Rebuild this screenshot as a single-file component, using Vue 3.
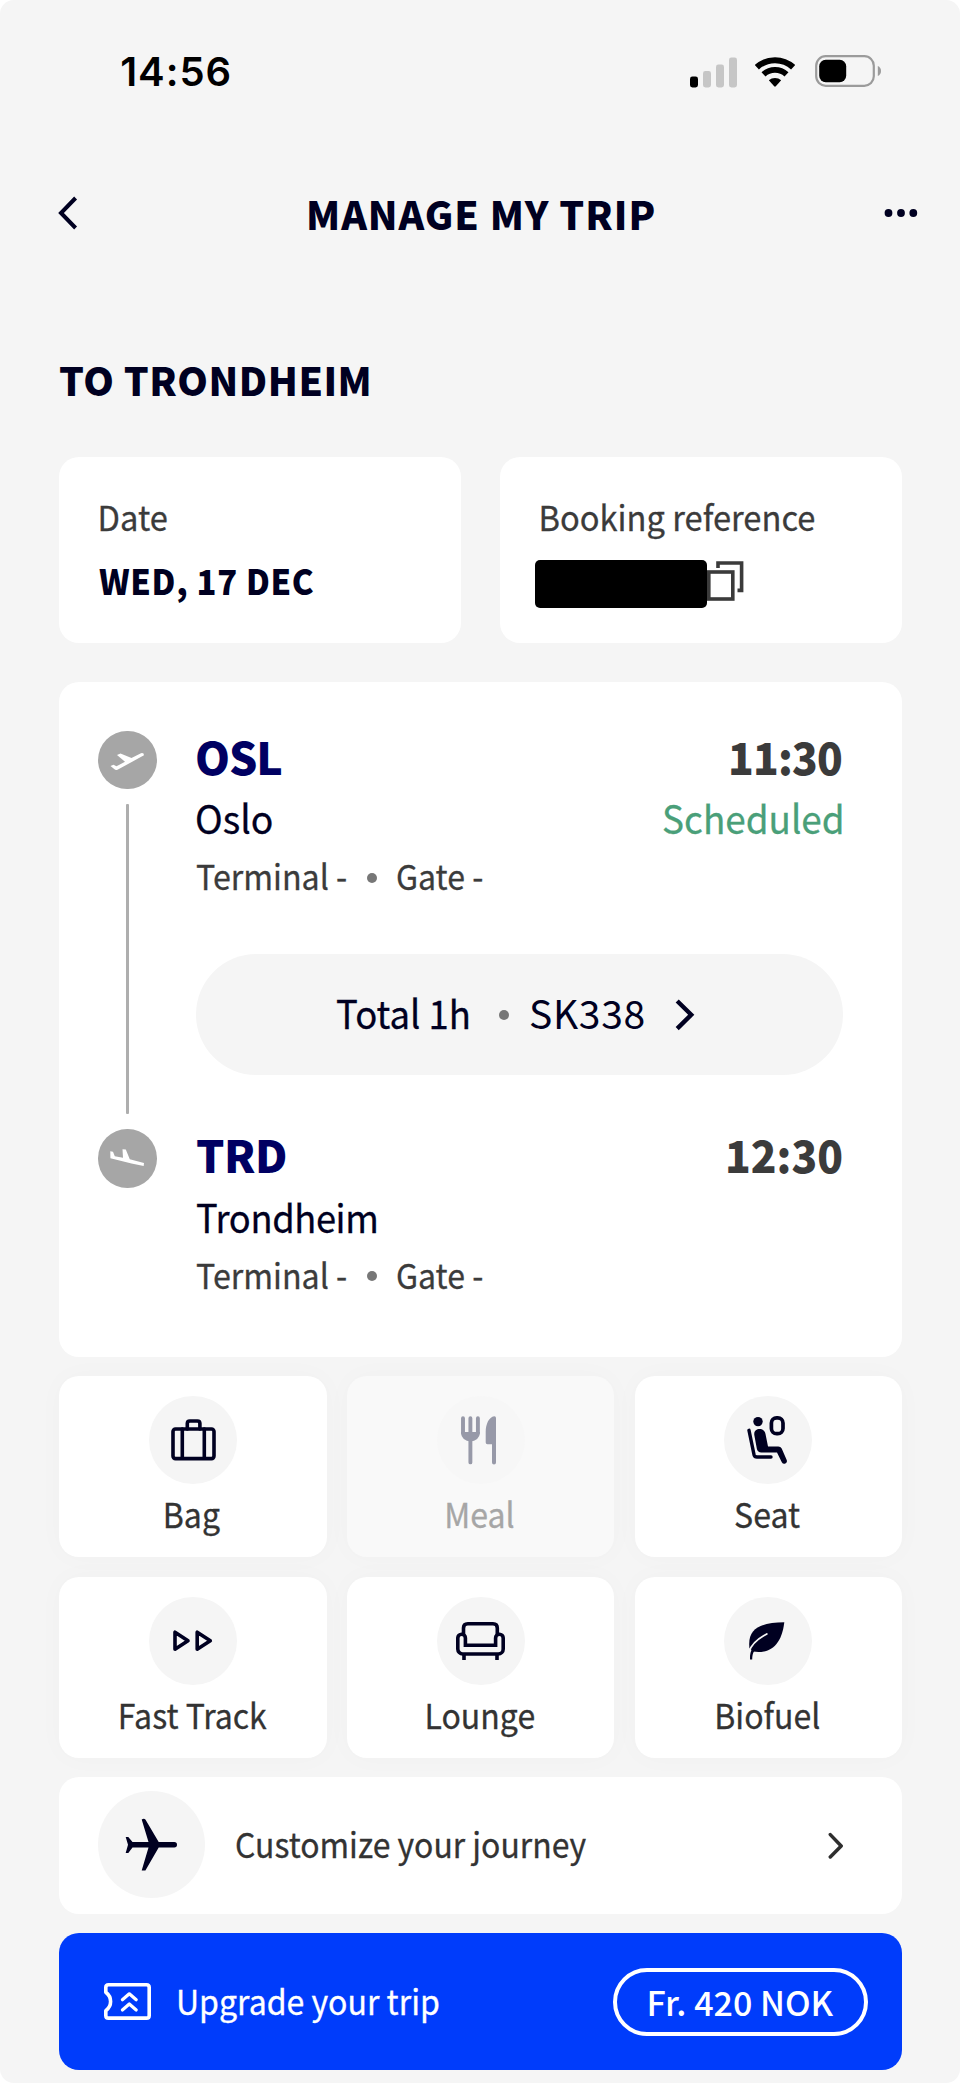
<script setup>
const stops = [
  { id: 'dep', code: 'OSL', city: 'Oslo', time: '11:30', status: 'Scheduled' },
  { id: 'arr', code: 'TRD', city: 'Trondheim', time: '12:30', status: '' }
]
const services = [
  { id: 'bag', label: 'Bag' },
  { id: 'meal', label: 'Meal', disabled: true },
  { id: 'seat', label: 'Seat' },
  { id: 'fast', label: 'Fast Track' },
  { id: 'lounge', label: 'Lounge' },
  { id: 'biofuel', label: 'Biofuel' }
]
</script>

<template>
  <div class="screen">
    <header class="status">
      <span class="clock">14:56</span>
      <div class="indicators">
        <svg class="signal" width="47" height="31" viewBox="0 0 47 31">
          <rect x="0" y="19.5" width="8" height="11" rx="2.4" fill="#000" />
          <rect x="13" y="14" width="8" height="16.5" rx="2.4" fill="#c6c6c6" />
          <rect x="26" y="7.5" width="8" height="23" rx="2.4" fill="#c6c6c6" />
          <rect x="39" y="0.5" width="8" height="30" rx="2.4" fill="#c6c6c6" />
        </svg>
        <svg class="wifi" width="40" height="30" viewBox="0 0 40 30">
          <path d="M1.9 10.2A26.8 26.8 0 0 1 38.1 10.2" fill="none" stroke="#000" stroke-width="6" />
          <path d="M8.5 17.4A16.9 16.9 0 0 1 31.5 17.4" fill="none" stroke="#000" stroke-width="5.8" />
          <path d="M13.8 23.3A9.3 9.3 0 0 1 26.2 23.3L20.8 29.3Q20 30 19.2 29.3Z" fill="#000" />
        </svg>
        <svg class="battery" width="67" height="32" viewBox="0 0 67 32">
          <rect x="1.2" y="1.2" width="57.6" height="29.6" rx="9.5" fill="none" stroke="#9b9b9b" stroke-width="2.2" />
          <rect x="4.2" y="4.8" width="27" height="22.4" rx="6.5" fill="#000" />
          <path d="M62.8 11Q66 12.3 66 16T62.8 21Z" fill="#9b9b9b" />
        </svg>
      </div>
    </header>

    <nav class="nav">
      <svg class="back" width="20" height="34" viewBox="0 0 20 34">
        <path d="M17.6 2L3 17L17.6 32" fill="none" stroke="#000021" stroke-width="4" />
      </svg>
      <h1 class="title">MANAGE MY TRIP</h1>
      <svg class="more" width="34" height="10" viewBox="0 0 34 10">
        <circle cx="4.5" cy="5" r="3.9" fill="#000021" />
        <circle cx="17" cy="5" r="3.9" fill="#000021" />
        <circle cx="29.3" cy="5" r="3.9" fill="#000021" />
      </svg>
    </nav>

    <main class="content">
      <h2 class="heading">TO TRONDHEIM</h2>

      <section class="info">
        <div class="card info-card">
          <div class="label">Date</div>
          <div class="date">WED, 17 DEC</div>
        </div>
        <div class="card info-card">
          <div class="label">Booking reference</div>
          <div class="reference">
            <div class="redacted"></div>
            <svg width="38" height="42" viewBox="0 0 38 42">
              <rect x="1.8" y="12" width="24" height="27" fill="none" stroke="#3b3b3b" stroke-width="3.6" />
              <path d="M11 8V3H34.6V30.4H30.5" fill="none" stroke="#3b3b3b" stroke-width="3.6" />
            </svg>
          </div>
        </div>
      </section>

      <section class="card flight">
        <div class="timeline">
          <div class="node">
            <svg width="58.6" height="58.6" viewBox="0 0 58.6 58.6">
              <path d="M12.5 35L15.5 33.8L18.5 35.3L27 30.8L19 24L22.5 22.6L33.5 27L43 22.2Q46 21.5 46 24.3L19.5 38.8Q17.5 39.5 16.5 38.3Z" fill="#fff" />
            </svg>
          </div>
          <div class="track"></div>
          <div class="node">
            <svg width="58.6" height="58.6" viewBox="0 0 58.6 58.6">
              <path d="M12.3 22.3L15 22.8L16.8 27.3L25 28.8L24.5 20.3L27.8 20.5L31.8 30.3L46 34L45.7 37L33.5 34.6L12.4 29.3Z" fill="#fff" />
            </svg>
          </div>
        </div>
        <div class="legs">
          <template v-for="(s, i) in stops" :key="s.id">
            <div class="stop" :class="s.id">
              <div class="row code-row"><span class="code">{{ s.code }}</span><span class="time">{{ s.time }}</span></div>
              <div class="row city-row"><span class="city">{{ s.city }}</span><span class="scheduled">{{ s.status }}</span></div>
              <div class="place"><span class="terminal">Terminal -</span><i class="dot"></i><span class="gate">Gate -</span></div>
            </div>
            <div v-if="i === 0" class="summary">
              <span class="total">Total 1h</span><i class="dot"></i><span class="number">SK338</span>
              <svg width="20" height="32" viewBox="0 0 20 32">
                <path d="M2.2 2L16.2 15.8L2.2 29.6" fill="none" stroke="#000021" stroke-width="4.4" />
              </svg>
            </div>
          </template>
        </div>
      </section>

      <section class="services">
        <div v-for="s in services" :key="s.id" class="tile" :class="{ disabled: s.disabled }">
          <div class="bubble">
            <svg width="88" height="88" viewBox="0 0 88 88" fill="none" stroke-linecap="round" stroke-linejoin="round">
              <g v-if="s.id === 'bag'" stroke="#000021" stroke-width="3.6">
                <rect x="24" y="33" width="41" height="29.6" rx="2.5" />
                <path d="M33.3 33V62M55.3 33V62M38.3 33V27.5Q38.3 25 40.8 25H48.4Q50.9 25 50.9 27.5V33" />
              </g>
              <g v-else-if="s.id === 'meal'" fill="#9799a8">
                <path d="M26 22.2V37M33.4 22.2V66.4M40.9 22.2V37" stroke="#9799a8" stroke-width="3.9" />
                <path d="M24.05 36H42.85V37A9.4 8.5 0 0 1 24.05 37Z" />
                <path d="M59 22Q59 20.2 57.2 20.3C52 21 48.7 28 48.7 36V46.5Q48.7 48.3 50.5 48.3H55V66.4A2 2 0 0 0 59 66.4Z" />
              </g>
              <g v-else-if="s.id === 'seat'">
                <circle cx="34" cy="25.6" r="4.7" fill="#000021" />
                <rect x="47.4" y="21.8" width="11.6" height="15.8" rx="5.2" stroke="#000021" stroke-width="3.7" />
                <path d="M25 34.3L30 58.7Q30.6 61 33 61H47" stroke="#000021" stroke-width="3.4" />
                <path d="M30.3 39C29.8 34.8 32.5 33 35.6 33C39 33 41 35 41.5 38L44 50.4H54.3Q56.6 50.4 57.7 52.4L62.7 64Q63.6 66.6 61.4 67.6Q59 68.4 57.8 66.2L53 56.6H37.3Q33.7 56.3 32.9 53Z" fill="#000021" />
              </g>
              <g v-else-if="s.id === 'fast'" stroke="#000021" stroke-width="3.6">
                <path d="M26 35.2V52.2L39 43.8ZM48.2 35.2V52.2L61.3 43.8Z" />
              </g>
              <g v-else-if="s.id === 'lounge'" stroke="#000021" stroke-width="3.6" stroke-linecap="butt">
                <path d="M26.5 37.5V31Q26.5 26.8 30.8 26.8H56Q60.3 26.8 60.3 31V37.5" />
                <path d="M28.4 48.3V41A3.8 3.8 0 0 0 20.8 41V52A5 5 0 0 0 25.8 57H61.2A5 5 0 0 0 66.2 52V41A3.8 3.8 0 0 0 58.6 41V48.3Z" stroke-linejoin="miter" />
                <path d="M27 57V63M60 57V63" />
              </g>
              <g v-else>
                <path d="M60.3 25.3C38 25.6 24.8 30.5 25.2 47.5L25.4 51L29 54.6C45 57 57.5 49.5 60.3 25.3Z" fill="#000021" />
                <path d="M42.8 37C35 41 27.5 46.5 25 55" stroke="#f5f5f5" stroke-width="1.8" />
                <path d="M26 62.4C25.8 57.5 26.6 53.6 29 50.8L30.6 53.4C28.6 56 28.2 59 28.2 62.4Z" fill="#000021" />
              </g>
            </svg>
          </div>
          <div class="tile-label">{{ s.label }}</div>
        </div>
      </section>

      <section class="card customize">
        <div class="plane">
          <svg width="107" height="107" viewBox="0 0 107 107">
            <path d="M43.7 28.6Q45.8 27.2 47.4 28.4L60.7 51H76.3A2.7 2.7 0 0 1 76.3 56.4H60.7L47.4 79.4H43.7L50.5 56.4H34.5L30.3 62H27.7L30 53.7L27.7 46H30.3L34.5 51H50.5Z" fill="#000021" />
          </svg>
        </div>
        <span class="customize-text">Customize your journey</span>
        <svg width="16" height="28" viewBox="0 0 16 28">
          <path d="M2.3 2.6L13.2 14L2.3 25" fill="none" stroke="#2e2e2e" stroke-width="3.5" stroke-linecap="round" stroke-linejoin="round" />
        </svg>
      </section>

      <section class="upgrade">
        <svg width="47" height="37" viewBox="0 0 47 37" fill="none" stroke="#fff" stroke-linecap="round" stroke-linejoin="round">
          <path d="M1.8 9.3V4.5Q1.8 1.8 4.5 1.8H42.5Q45.2 1.8 45.2 4.5V32.4Q45.2 35.1 42.5 35.1H4.5Q1.8 35.1 1.8 32.4V27.7Q6.6 24 6.6 18.5T1.8 9.3Z" stroke-width="3.6" />
          <path d="M18.4 16.8L25.3 10.8L32.2 16.8M18.4 27L25.3 21L32.2 27" stroke-width="3.2" />
        </svg>
        <span class="upgrade-text">Upgrade your trip</span>
        <span class="price">Fr. 420 NOK</span>
      </section>
    </main>
  </div>
</template>

<style>
body { margin: 0; background: #fff; }
</style>

<style scoped>
.screen {
  box-sizing: border-box;
  width: 960px;
  height: 2083px;
  overflow: hidden;
  background: #f5f5f5;
  border-radius: 14px;
  font-family: "Noto Sans CJK SC", "Noto Sans", sans-serif;
  color: #333;
}
svg { display: block; flex: none; }
h1, h2 { margin: 0; }

/* Slightly condensed body text */
.label, .date, .time, .city, .scheduled, .terminal, .gate, .total, .customize-text, .upgrade-text {
  transform-origin: left center;
  white-space: nowrap;
}
.label, .city, .scheduled, .terminal, .gate, .total, .tile-label, .customize-text, .upgrade-text {
  -webkit-text-stroke: 0.3px currentColor;
}

.status {
  box-sizing: border-box;
  height: 144px;
  padding: 0 78.5px 0 120.2px;
  display: flex;
  align-items: center;
  justify-content: space-between;
}
.clock { font: 600 40px/48px Inter, sans-serif; letter-spacing: 0.98px; color: #000; }
.indicators { display: flex; align-items: center; }
.signal { margin-right: 18.5px; }
.wifi { margin-right: 19.5px; }
.battery { margin-top: -2px; }

.nav {
  box-sizing: border-box;
  height: 138px;
  padding: 0 42px 0 58px;
  display: flex;
  align-items: center;
}
.title {
  margin-left: 228px;
  flex: 1;
  font-size: 39px;
  line-height: 56px;
  font-weight: 900;
  letter-spacing: 0.94px;
  color: #000021;
}

.content { padding: 67px 58px 0 59px; }
.heading {
  height: 60px;
  font-size: 39px;
  line-height: 60px;
  font-weight: 900;
  letter-spacing: 0.5px;
  color: #000021;
}
.card { background: #fff; border-radius: 20px; }

.info { display: flex; gap: 39.5px; margin-top: 47.5px; }
.info-card { box-sizing: border-box; flex: 1; height: 186.5px; padding: 37.3px 38px 0; }
.label { font-size: 34px; line-height: 44px; color: #3b3b3b; transform: translate(0.5px, 1px) scaleX(0.961); }
.date {
  margin: 19.5px 0 0 2px;
  font-size: 34.5px;
  line-height: 44px;
  font-weight: 900;
  letter-spacing: 0.7px;
  color: #000021;
  transform: translateY(1px) scaleX(0.95);
}
.reference { display: flex; margin: 22.2px 0 0 -3.5px; }
.redacted { width: 172.5px; height: 47.6px; border-radius: 5px; background: #000; }

.flight {
  box-sizing: border-box;
  display: flex;
  height: 674.7px;
  margin-top: 39px;
  padding: 0 59px 0 39px;
}
.timeline { width: 98px; padding-top: 48.7px; display: flex; flex-direction: column; }
.node { width: 58.6px; height: 58.6px; border-radius: 50%; background: #a6a6a6; }
.track { width: 3px; height: 310px; margin: 14.7px 0 15.3px 28px; background: #aeaeae; border-radius: 1px; }
.legs { flex: 1; padding-top: 43.6px; }
.row { display: flex; justify-content: space-between; }
.code-row { font-size: 44.5px; line-height: 60px; font-weight: 900; }
.code { margin-left: -1px; letter-spacing: -1.06px; color: #000062; }
.time { color: #3b3b3b; transform-origin: right center; transform: scaleX(0.951); }
.dep .time { letter-spacing: -0.8px; margin-right: 0.8px; }
.arr .code { margin-left: 0; letter-spacing: -0.49px; }
.city-row { margin-top: 3px; height: 56px; font-size: 39px; line-height: 56px; }
.city { margin-left: -1px; color: #000021; transform: scaleX(0.957); }
.arr .city { margin-left: -0.5px; transform: translateY(0.5px) scaleX(0.93); letter-spacing: -0.4px; }
.scheduled { color: #4a9f79; transform-origin: right center; transform: translateX(1.5px) scaleX(0.945); }
.place {
  display: flex;
  align-items: center;
  height: 44px;
  margin-top: 8.6px;
  font-size: 34px;
  line-height: 44px;
  color: #3b3b3b;
}
.dot { width: 10px; height: 10px; border-radius: 50%; background: #777; flex: none; }
.place .dot { margin: 5.6px 19.8px 0 0; }
.terminal { width: 171.2px; margin-left: -0.5px; transform: translateY(1px) scaleX(0.947); }
.gate { transform: translateY(1px) scaleX(0.942); }
.summary {
  box-sizing: border-box;
  display: flex;
  align-items: center;
  height: 121.5px;
  margin: 56.8px 0 48.6px;
  padding-left: 140px;
  border-radius: 61px;
  background: #f5f5f5;
  font-size: 39px;
  line-height: 56px;
  color: #000021;
}
.total { width: 163px; margin-bottom: 4.5px; transform: scaleX(0.936); }
.summary .dot { margin: 0 20px 0 0; }
.number { letter-spacing: 0.69px; margin: 0 29px 4.5px 0; }

.services {
  display: grid;
  grid-template-columns: repeat(3, 267.5px);
  grid-auto-rows: 180.7px;
  justify-content: space-between;
  row-gap: 20.3px;
  margin-top: 19.3px;
}
.tile {
  display: flex;
  flex-direction: column;
  align-items: center;
  padding-top: 20px;
  box-sizing: border-box;
  border-radius: 20px;
  background: #fff;
  box-shadow: 0 0 28px rgba(0, 0, 80, 0.025);
}
.bubble { width: 88px; height: 88px; border-radius: 50%; background: #f5f5f5; }
.tile-label {
  margin-top: 6.9px;
  padding-right: 2px;
  font-size: 34px;
  line-height: 44px;
  color: #333;
  transform: translateY(1px) scaleX(0.942);
}
.disabled { background: #f9f9f9; }
.disabled .bubble { background: #f7f7f7; }
.disabled .tile-label { color: #a6a6a6; }

.customize {
  box-sizing: border-box;
  display: flex;
  align-items: center;
  height: 137px;
  margin-top: 19.5px;
  padding: 0 58px 0 39.3px;
}
.plane { width: 107px; height: 107px; margin-bottom: 2px; border-radius: 50%; background: #f5f5f5; }
.customize-text {
  flex: 1;
  margin: 0 0 6px 29.7px;
  font-size: 34px;
  line-height: 44px;
  transform: translateY(1px) scaleX(0.939);
}

.upgrade {
  box-sizing: border-box;
  display: flex;
  align-items: center;
  height: 136.7px;
  margin-top: 19.3px;
  padding: 0 34px 0 44.6px;
  border-radius: 20px;
  background: #003cfb;
  color: #fff;
  font-size: 34px;
  line-height: 44px;
}
.upgrade-text { flex: 1; margin: 0 0 4px 25px; transform: translateY(1px) scaleX(0.943); }
.price {
  box-sizing: border-box;
  width: 255px;
  height: 68.5px;
  padding: 8px 0 0 29.5px;
  border: 4.5px solid #fff;
  border-radius: 35px;
  font-weight: 500;
}
</style>
